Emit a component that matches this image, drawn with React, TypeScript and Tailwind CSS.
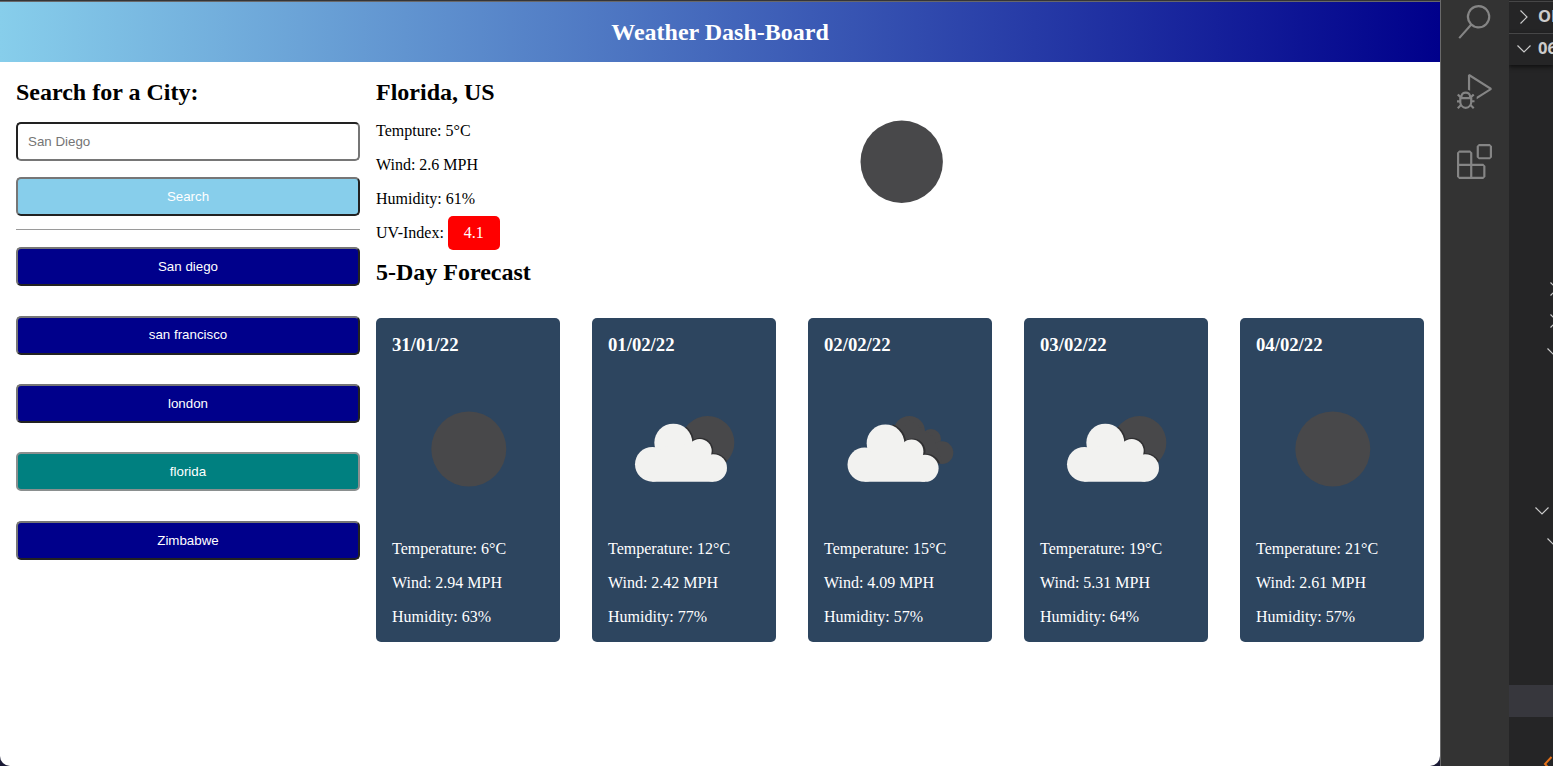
import { VscDebugAlt, VscExtensions, VscSearch } from "react-icons/vsc";

type Sky = "clear" | "few" | "broken";

interface Day {
  date: string;
  sky: Sky;
  temp: string;
  wind: string;
  humidity: string;
}

const days: Day[] = [
  { date: "31/01/22", sky: "clear", temp: "6", wind: "2.94", humidity: "63" },
  { date: "01/02/22", sky: "few", temp: "12", wind: "2.42", humidity: "77" },
  { date: "02/02/22", sky: "broken", temp: "15", wind: "4.09", humidity: "57" },
  { date: "03/02/22", sky: "few", temp: "19", wind: "5.31", humidity: "64" },
  { date: "04/02/22", sky: "clear", temp: "21", wind: "2.61", humidity: "57" },
];

const cities = ["San diego", "san francisco", "london", "florida", "Zimbabwe"];

function Cloud() {
  return (
    <>
      <circle cx="160" cy="128" r="57" />
      <circle cx="97" cy="193" r="52" />
      <circle cx="239" cy="153" r="36" />
      <circle cx="280" cy="204" r="41" />
      <path d="M97 245H280V190L240 140L160 130L97 160Z" />
    </>
  );
}

function SkyIcon({ sky }: { sky: Sky }) {
  if (sky === "clear") {
    return (
      <svg className="block h-[185px] w-[152px]" viewBox="0 0 152 185">
        <circle cx="76.8" cy="94" r="37.5" fill="#48484a" />
      </svg>
    );
  }
  const back =
    sky === "few" ? (
      <circle cx="263" cy="128" r="80" />
    ) : (
      <>
        <circle cx="238" cy="95" r="47" />
        <circle cx="303" cy="117" r="30" />
        <circle cx="336" cy="158" r="34" />
        <path d="M200 110L240 60L310 110L336 185L250 185Z" />
      </>
    );
  return (
    <svg className="block h-[185px] w-[152px]" viewBox="0 0 152 185">
      <g transform={sky === "few" ? "translate(12 45) scale(.33333)" : "translate(6 45) scale(.33333)"}>
        <g fill="#48484a">{back}</g>
        <clipPath id={sky === "few" ? "few-back" : "broken-back"}>
          {sky === "few" ? (
            <circle cx="263" cy="128" r="80" />
          ) : (
            <path d="M185 95A47 47 0 0 1 282 87A30 30 0 0 1 332 122A34 34 0 1 1 325 190L200 190Z" />
          )}
        </clipPath>
        <g clipPath={sky === "few" ? "url(#few-back)" : "url(#broken-back)"}>
          <g
            fill="#303032"
            stroke="#303032"
            strokeWidth="5"
            transform={sky === "few" ? "translate(2 -1)" : "translate(9 1)"}
          >
            <Cloud />
          </g>
        </g>
        <g fill="#f2f2f0" transform={sky === "few" ? undefined : "translate(8 3) scale(.99)"}>
          <Cloud />
        </g>
      </g>
    </svg>
  );
}

function Chevron({ dir, className }: { dir: "right" | "down" | "left"; className: string }) {
  const d =
    dir === "down" ? "M1.5 4.5L8 11L14.5 4.5" : dir === "right" ? "M4.5 1.5L11 8L4.5 14.5" : "M11.5 1L5 8L11.5 15";
  return (
    <svg
      className={`size-4 shrink-0 ${className}`}
      viewBox="0 0 16 16"
      fill="none"
      stroke="currentColor"
      strokeWidth={dir === "left" ? 2 : 1.2}
    >
      <path d={d} />
    </svg>
  );
}

const treeRows: { dir?: "right" | "down" | "left"; indent?: string; active?: boolean }[] = [
  { dir: "right", indent: "ml-[37px]" },
  { dir: "right", indent: "ml-[37px]" },
  { dir: "down", indent: "ml-[37px]" },
  {},
  {},
  {},
  {},
  { dir: "down", indent: "ml-[25px]" },
  { dir: "down", indent: "ml-[37px]" },
  {},
  {},
  {},
  {},
  { active: true },
  {},
  { dir: "left", indent: "ml-[31px] text-[#e37019]" },
];

function Editor() {
  return (
    <div className="flex h-full flex-1 overflow-hidden border-l border-[#69696a]">
      <div className="flex w-[68px] shrink-0 flex-col items-center gap-[35px] bg-[#333333] pt-[5px] pr-[2px] text-[#858585]">
        <VscSearch className="size-[34px] shrink-0" />
        <VscDebugAlt className="size-[35px] shrink-0" />
        <VscExtensions className="size-[35px] shrink-0" />
      </div>
      <div className="flex w-[44px] shrink-0 flex-col overflow-hidden bg-[#252526] font-['Noto_Sans',sans-serif] text-[16.5px] font-bold text-[#cccccc]">
        <div className="mt-px flex h-8 shrink-0 items-center gap-[6px] border-t border-[#464647] pb-[2px] pl-[7px]">
          <Chevron dir="right" className="" />
          <span>OP</span>
        </div>
        <div className="flex h-8 shrink-0 items-center gap-[6px] border-t border-[#464647] pb-[2px] pl-[7px] shadow-[0_2px_4px_#101010]">
          <Chevron dir="down" className="" />
          <span>06</span>
        </div>
        <div className="flex flex-col pt-[208px]">
          {treeRows.map((row, i) => (
            <div
              key={i}
              className={`flex h-[31.7px] shrink-0 items-center ${row.active ? "bg-[#37373d]" : ""}`}
            >
              {row.dir && <Chevron dir={row.dir} className={row.indent ?? ""} />}
            </div>
          ))}
        </div>
      </div>
    </div>
  );
}

function Sidebar() {
  return (
    <aside className="flex w-[344px] shrink-0 flex-col pt-[17px] font-['Liberation_Sans',sans-serif] text-[13.333px]">
      <h2 className="mb-4 font-['Liberation_Serif',serif] text-2xl leading-[27px] font-bold">
        Search for a City:
      </h2>
      <input
        placeholder="San Diego"
        className="h-[39px] rounded-[5px] border-2 border-t-[#222222] border-r-[#767676] border-b-[#767676] border-l-[#222222] px-[10px] placeholder:text-[#757575]"
      />
      <button className="mt-4 h-[39px] rounded-[5px] border-2 border-t-[#767676] border-r-[#222222] border-b-[#222222] border-l-[#767676] bg-[#87ceeb] text-white">
        Search
      </button>
      <hr className="mt-[13px] mb-[17px] border-[#9a9a9a]" />
      <div className="flex flex-col gap-[29.5px]">
        {cities.map((city) =>
          city === "florida" ? (
            <button
              key={city}
              className="-mt-[0.5px] mb-[0.5px] h-[39px] rounded-[5px] border-2 border-[#8a8f8f] bg-[#008080] text-white"
            >
              {city}
            </button>
          ) : (
            <button
              key={city}
              className="h-[39px] rounded-[5px] border-2 border-t-[#767676] border-r-[#222222] border-b-[#222222] border-l-[#767676] bg-[#00008b] text-white"
            >
              {city}
            </button>
          ),
        )}
      </div>
    </aside>
  );
}

export default function App() {
  return (
    <div className="flex h-[766px] w-[1553px] overflow-hidden bg-[#1a1a35] font-['Liberation_Serif',serif] text-base text-black">
      <div className="flex w-[1440px] shrink-0 flex-col overflow-hidden rounded-b-[10px] border-t border-[#353537] bg-white">
        <header className="flex h-[61px] shrink-0 items-center justify-center border-t border-[#68686a] bg-linear-to-r from-[#87ceeb] to-[#00008b] [--tw-gradient-position:to_right]">
          <h1 className="text-2xl leading-[27px] font-bold text-white">Weather Dash-Board</h1>
        </header>
        <div className="flex gap-4 px-4">
          <Sidebar />
          <main className="flex flex-1 flex-col">
            <section className="flex h-[188px]">
              <div className="w-[460px] pt-[17px]">
                <h2 className="mb-2 text-2xl leading-[27px] font-bold">Florida, US</h2>
                <p className="leading-[34px]">Tempture: 5°C</p>
                <p className="leading-[34px]">Wind: 2.6 MPH</p>
                <p className="leading-[34px]">Humidity: 61%</p>
                <p className="leading-[34px]">
                  UV-Index:{" "}
                  <span className="inline-block w-[52px] rounded-[5px] bg-[#ff0000] text-center text-white">
                    4.1
                  </span>
                </p>
              </div>
              <svg className="mt-[33px] size-[132px]" viewBox="0 0 132 132">
                <circle cx="65.7" cy="66.7" r="41.2" fill="#48484a" />
              </svg>
            </section>
            <h2 className="mt-[9px] mb-8 text-2xl leading-[27px] font-bold">5-Day Forecast</h2>
            <section className="flex gap-8">
              {days.map((day) => (
                <article
                  key={day.date}
                  className="h-[324px] w-[184px] rounded-[5px] bg-[#2d455f] px-4 pt-4 text-white"
                >
                  <h3 className="text-[18.72px] leading-[21px] font-bold">{day.date}</h3>
                  <SkyIcon sky={day.sky} />
                  <p className="mb-4 leading-[18px]">Temperature: {day.temp}°C</p>
                  <p className="mb-4 leading-[18px]">Wind: {day.wind} MPH</p>
                  <p className="leading-[18px]">Humidity: {day.humidity}%</p>
                </article>
              ))}
            </section>
          </main>
        </div>
      </div>
      <Editor />
    </div>
  );
}
